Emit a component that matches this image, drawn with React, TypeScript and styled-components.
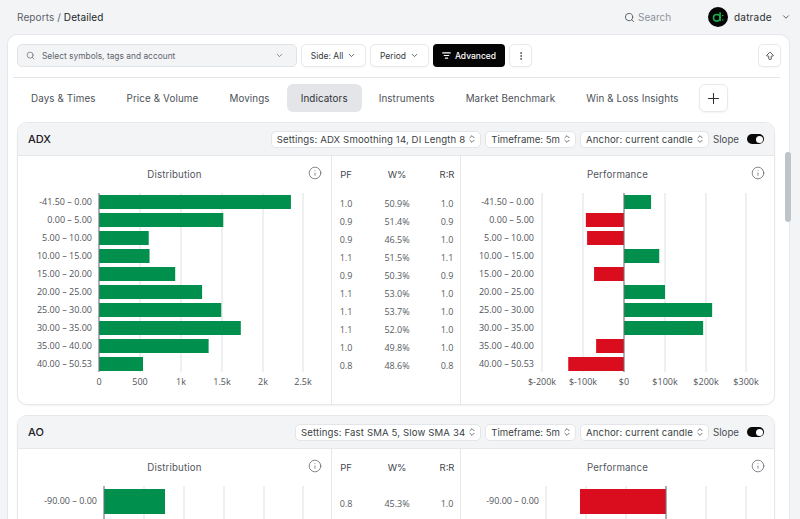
import React from "react";
import styled, { createGlobalStyle } from "styled-components";
import { Search, ChevronDown, ChevronsUpDown, Info, MoreVertical, Plus, ArrowBigUp, ListFilter } from "lucide-react";

const Global = createGlobalStyle`
  html, body { margin: 0; padding: 0; height: 100%; overflow: hidden; }
  body { background: #f3f4f6; font-family: Inter, "Liberation Sans", sans-serif; color: #1f2328; }
  * { box-sizing: border-box; }
`;

const Page = styled.div`
  width: 800px; height: 519px; overflow: hidden; display: flex; flex-direction: column; position: relative;
`;
const TopBar = styled.header`
  height: 34px; flex: none; display: flex; align-items: center; padding: 0 9px 0 17px;
`;
const Crumb = styled.div`
  font-size: 10px; color: #5a6068; flex: 1; letter-spacing: .1px;
  b { font-weight: 400; color: #22262b; }
`;
const TopSearch = styled.div`
  display: flex; align-items: center; gap: 3px; width: 84px; font-size: 10px; color: #8d939a;
  svg { color: #555b62; }
`;
const Logo = styled.div`
  width: 20px; height: 20px; margin-right: 6px; flex: none;
`;
const UserName = styled.span`
  font-size: 10px; color: #2c3035; width: 36px; letter-spacing: .2px; margin-right: 11px;
`;
const Panel = styled.main`
  margin-left: 7px; width: 783px; flex: 1; background: #fff; border: 1px solid #e5e7ea; border-bottom: 0;
  border-radius: 10px 10px 0 0; padding: 9px 8px 0 9px; overflow: hidden;
`;
const FilterRow = styled.div`
  display: flex; gap: 4px; height: 23px; align-items: stretch;
`;
const SymbolSelect = styled.div`
  width: 280px; border: 1px solid #e0e3e6; border-radius: 5px; background: #f3f4f6; display: flex; align-items: center;
  padding: 0 12px 0 8px; font-size: 8.4px; color: #5f656c; gap: 7px;
  span { flex: 1; }
`;
const FilterButton = styled.div<{ $w: number }>`
  width: ${p => p.$w}px; border: 1px solid #e7e9eb; border-radius: 5px; background: #fff; display: flex; align-items: center; justify-content: center;
  font-size: 8.5px; color: #34383d; gap: 4px; box-shadow: 0 1px 2px rgba(0,0,0,.04);
`;
const AdvancedButton = styled.div`
  width: 72px; border-radius: 4px; background: #050505; color: #fff; display: flex; align-items: center; justify-content: center;
  font-size: 8.5px; font-weight: 500; gap: 4px;
`;
const Spring = styled.div`flex: 1;`;
const Rule = styled.div`
  height: 1px; background: #e2e4e7; margin: 10px 0 6px -4px; width: 767px;
`;
const TabRow = styled.nav`
  display: flex; align-items: center; height: 28px; gap: 3px;
`;
const Tab = styled.div<{ $active?: boolean }>`
  height: 28px; padding: 0 14px; display: flex; align-items: center; justify-content: center; border-radius: 6px;
  font-size: 9.8px; color: ${p => p.$active ? "#2e3237" : "#4c5157"}; background: ${p => p.$active ? "#e3e5e8" : "transparent"};
  flex: none; letter-spacing: .12px;
`;
const AddTab = styled.div`
  width: 29px; height: 28px; border: 1px solid #e7e9eb; border-radius: 6px; display: flex; align-items: center; justify-content: center;
  box-shadow: 0 1px 2px rgba(0,0,0,.05); margin-left: 3px; color: #2a2d31;
`;
const Card = styled.section<{ $h: number }>`
  width: 758px; height: ${p => p.$h}px; flex: none; border: 1px solid #e6e8ea; border-radius: 10px; margin-top: 10px; overflow: hidden;
  box-shadow: 0 1px 2px rgba(0,0,0,.05); background: #fff; display: flex; flex-direction: column;
`;
const CardHead = styled.div`
  height: 33px; flex: none; background: #f3f4f6; border-bottom: 1px solid #e6e8ea; display: flex; align-items: center; gap: 4px; padding: 0 10px 0 10px;
`;
const CardTitle = styled.div`
  font-size: 11px; font-weight: 500; color: #1d2024; flex: 1;
`;
const Pick = styled.div<{ $track?: number }>`
  height: 17px; border: 1px solid #e3e5e8; border-radius: 5px; background: #fff; display: flex; align-items: center; padding: 0 3px 0 5px;
  font-size: 9.6px; color: #3a3f45; gap: 2px; white-space: nowrap; letter-spacing: ${p => p.$track ?? 0.13}px;
  svg { color: #555; }
`;
const SlopeLabel = styled.span`
  font-size: 9.7px; color: #4a4f55; margin-right: 4px;
`;
const Toggle = styled.div`
  width: 17px; height: 10px; border-radius: 5px; background: #0a0a0a; position: relative; flex: none;
  &::after { content: ""; position: absolute; right: 1.5px; top: 1.5px; width: 7px; height: 7px; border-radius: 50%; background: #fff; }
`;
const CardBody = styled.div`
  flex: 1; display: flex; min-height: 0;
`;
const ChartCol = styled.div<{ $w: number }>`
  width: ${p => p.$w}px; flex: none; position: relative;
`;
const ChartTitle = styled.div`
  height: 36px; display: flex; align-items: center; justify-content: center; font-size: 9.7px; color: #52575d; letter-spacing: .15px;
`;
const InfoBadge = styled.span`
  position: absolute; right: 9px; top: 10px; color: #55595f; display: flex;
`;
const Stats = styled.div`
  width: 130px; flex: none; border-left: 1px solid #e6e8ea; border-right: 1px solid #e6e8ea;
`;
const StatHead = styled.div`
  display: grid; grid-template-columns: 28px 74px 26px; height: 36px; align-items: center; margin-bottom: 2px;
  font-size: 9.5px; color: #43474d; text-align: center;
`;
const StatRow = styled.div<{ $h: number }>`
  display: grid; grid-template-columns: 28px 74px 26px; height: ${p => p.$h}px; align-items: center;
  font-family: "Open Sans", sans-serif; font-size: 9px; color: #565b61; text-align: center;
`;
const Scrollbar = styled.div`
  position: absolute; left: 785px; top: 152px; width: 6px; height: 70px; border-radius: 3px; background: #bfc4c8;
`;
const ChartSvg = styled.svg`
  display: block; font-family: "Open Sans", sans-serif;
`;

const LABELS = ["-41.50 – 0.00","0.00 – 5.00","5.00 – 10.00","10.00 – 15.00","15.00 – 20.00","20.00 – 25.00","25.00 – 30.00","30.00 – 35.00","35.00 – 40.00","40.00 – 50.53"];
const DIST = [2355, 1525, 610, 620, 935, 1265, 1500, 1740, 1345, 540];
const PERF = [66, -93, -90, 86, -73, 100, 215, 193, -68, -136];
const STATS = [["1.0","50.9%","1.0"],["0.9","51.4%","0.9"],["0.9","46.5%","1.0"],["1.1","51.5%","1.1"],["0.9","50.3%","0.9"],["1.1","53.0%","1.0"],["1.1","53.7%","1.0"],["1.1","52.0%","1.0"],["1.0","49.8%","1.0"],["0.8","48.6%","0.8"]];

const GREEN = "#008f4c";
const RED = "#da0d1e";
const GRID = "#dcdfe2";
const AXIS_TEXT = "#4f545a";

type Bar = { label: string; from: number; to: number; color: string };

function Chart(props: { width: number; height: number; xs: number[]; ticks?: string[]; bars: Bar[]; axisX: number; top: number; inset: number; step: number; barH: number; labelX: number }) {
  const { width, height, xs, ticks, bars, axisX, top, inset, step, barH, labelX } = props;
  const bottom = ticks ? top + step * bars.length - 1 : height;
  return (
    <ChartSvg width={width} height={height} viewBox={`0 0 ${width} ${height}`}>
      {xs.map(x => <line key={x} x1={x} x2={x} y1={top} y2={bottom} stroke={GRID} strokeWidth={1} />)}
      {bars.map((b, i) => (
        <g key={b.label}>
          <text x={labelX} y={top + inset + i * step + barH / 2 + 2.7} fontSize={9} fill={AXIS_TEXT} textAnchor="end">{b.label}</text>
          <rect x={Math.min(b.from, b.to)} y={top + inset + i * step} width={Math.abs(b.to - b.from)} height={barH} fill={b.color} />
        </g>
      ))}
      <line x1={axisX} x2={axisX} y1={top} y2={bottom} stroke="#6d7278" strokeWidth={1} />
      {ticks && ticks.map((t, i) => <text key={t} x={xs[i]} y={bottom + 13} fontSize={9} fill={AXIS_TEXT} textAnchor="middle">{t}</text>)}
    </ChartSvg>
  );
}

function Head(props: { title: string; settings: string }) {
  return (
    <CardHead>
      <CardTitle>{props.title}</CardTitle>
      <Pick>{props.settings} <ChevronsUpDown size={10} /></Pick>
      <Pick $track={0}>Timeframe: 5m <ChevronsUpDown size={10} /></Pick>
      <Pick>Anchor: current candle <ChevronsUpDown size={10} /></Pick>
      <SlopeLabel>Slope</SlopeLabel>
      <Toggle />
    </CardHead>
  );
}

export default function App() {
  const dOrigin = 81;
  const dBars: Bar[] = LABELS.map((l, i) => ({ label: l, from: dOrigin, to: dOrigin + DIST[i] * 0.0815, color: GREEN }));
  const pOrigin = 163;
  const pBars: Bar[] = LABELS.map((l, i) => ({ label: l, from: pOrigin, to: pOrigin + PERF[i] * 0.41, color: PERF[i] < 0 ? RED : GREEN }));
  const aoD: Bar[] = [{ label: "-90.00 – 0.00", from: 86, to: 147, color: GREEN }];
  const aoP: Bar[] = [{ label: "-90.00 – 0.00", from: 120, to: 206, color: RED }];
  return (
    <Page>
      <Global />
      <TopBar>
        <Crumb>Reports / <b>Detailed</b></Crumb>
        <TopSearch><Search size={11} /> Search</TopSearch>
        <Logo>
          <svg width="20" height="20" viewBox="0 0 20 20">
            <circle cx="10" cy="10" r="10" fill="#050505" />
            <circle cx="8.8" cy="10.8" r="3.3" fill="none" stroke="#17b04f" strokeWidth="1.6" />
            <path d="M12.1 5.2V14.2" stroke="#17b04f" strokeWidth="1.6" />
            <circle cx="14.8" cy="8.5" r=".8" fill="#17b04f" />
            <circle cx="14.8" cy="13" r=".8" fill="#17b04f" />
          </svg>
        </Logo>
        <UserName>datrade</UserName>
        <ChevronDown size={10} color="#444" />
      </TopBar>
      <Panel>
        <FilterRow>
          <SymbolSelect><Search size={9} color="#6d7278" /><span>Select symbols, tags and account</span><ChevronDown size={9} /></SymbolSelect>
          <FilterButton $w={65}>Side: All <ChevronDown size={9} /></FilterButton>
          <FilterButton $w={59}>Period <ChevronDown size={9} /></FilterButton>
          <AdvancedButton><ListFilter size={9} strokeWidth={3} /> Advanced</AdvancedButton>
          <FilterButton $w={23}><MoreVertical size={10} /></FilterButton>
          <Spring />
          <FilterButton $w={23}><ArrowBigUp size={10} /></FilterButton>
        </FilterRow>
        <Rule />
        <TabRow>
          <Tab>Days &amp; Times</Tab>
          <Tab>Price &amp; Volume</Tab>
          <Tab>Movings</Tab>
          <Tab $active>Indicators</Tab>
          <Tab>Instruments</Tab>
          <Tab>Market Benchmark</Tab>
          <Tab>Win &amp; Loss Insights</Tab>
          <AddTab><Plus size={17} strokeWidth={1.5} /></AddTab>
        </TabRow>
        <Card $h={283}>
          <Head title="ADX" settings="Settings: ADX Smoothing 14, DI Length 8" />
          <CardBody>
            <ChartCol $w={313}>
              <ChartTitle>Distribution</ChartTitle>
              <InfoBadge><Info size={14} strokeWidth={1.2} /></InfoBadge>
              <Chart width={313} height={212} top={1} inset={2} step={18} barH={14} labelX={74} axisX={81}
                xs={[81, 122, 163, 204, 245, 285]} ticks={["0","500","1k","1.5k","2k","2.5k"]} bars={dBars} />
            </ChartCol>
            <Stats>
              <StatHead><span>PF</span><span>W%</span><span>R:R</span></StatHead>
              {STATS.map((r, i) => <StatRow key={i} $h={18}><span>{r[0]}</span><span>{r[1]}</span><span>{r[2]}</span></StatRow>)}
            </Stats>
            <ChartCol $w={313}>
              <ChartTitle>Performance</ChartTitle>
              <InfoBadge><Info size={14} strokeWidth={1.2} /></InfoBadge>
              <Chart width={313} height={212} top={1} inset={2} step={18} barH={14} labelX={73} axisX={163}
                xs={[81, 122, 163, 204, 245, 285]} ticks={["$-200k","$-100k","$0","$100k","$200k","$300k"]} bars={pBars} />
            </ChartCol>
          </CardBody>
        </Card>
        <Card $h={120}>
          <Head title="AO" settings="Settings: Fast SMA 5, Slow SMA 34" />
          <CardBody>
            <ChartCol $w={313}>
              <ChartTitle>Distribution</ChartTitle>
              <InfoBadge><Info size={14} strokeWidth={1.2} /></InfoBadge>
              <Chart width={313} height={60} top={1} inset={3} step={26} barH={25} labelX={79} axisX={86}
                xs={[86, 126, 166, 206, 246, 285]} bars={aoD} />
            </ChartCol>
            <Stats>
              <StatHead><span>PF</span><span>W%</span><span>R:R</span></StatHead>
              <StatRow $h={32}><span>0.8</span><span>45.3%</span><span>1.0</span></StatRow>
            </Stats>
            <ChartCol $w={313}>
              <ChartTitle>Performance</ChartTitle>
              <InfoBadge><Info size={14} strokeWidth={1.2} /></InfoBadge>
              <Chart width={313} height={60} top={1} inset={3} step={26} barH={25} labelX={78} axisX={205}
                xs={[85, 125, 165, 205, 245, 285]} bars={[{ ...aoP[0], from: 119, to: 205 }]} />
            </ChartCol>
          </CardBody>
        </Card>
      </Panel>
      <Scrollbar />
    </Page>
  );
}
